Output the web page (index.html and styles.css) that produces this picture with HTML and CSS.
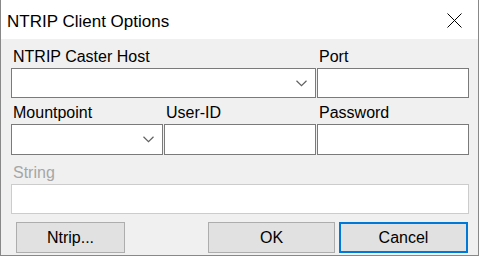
FILE: index.html
```html
<!DOCTYPE html>
<html lang="en">
<head>
    <meta charset="UTF-8">
    <title>NTRIP Client Options</title>
    <link rel="stylesheet" href="styles.css">
</head>
<body>
    <div class="window">
        <div class="titlebar">
            <span class="title">NTRIP Client Options</span>
            <svg class="close" width="15" height="15" viewBox="0 0 15 15">
                <path d="M0.5 0.5 L14.5 14.5 M14.5 0.5 L0.5 14.5" stroke="#000" stroke-width="1" fill="none"/>
            </svg>
        </div>

        <div class="content">
            <div class="fields">
                <div class="field span-2">
                    <label>NTRIP Caster Host</label>
                    <div class="box combo">
                        <svg class="chevron" width="11" height="7" viewBox="0 0 11 7"><path d="M0.5 0.8 L5.5 5.6 L10.5 0.8" stroke="#606060" stroke-width="1.2" fill="none"/></svg>
                    </div>
                </div>
                <div class="field">
                    <label>Port</label>
                    <div class="box"></div>
                </div>

                <div class="field">
                    <label>Mountpoint</label>
                    <div class="box combo tall">
                        <svg class="chevron" width="11" height="7" viewBox="0 0 11 7"><path d="M0.5 0.8 L5.5 5.6 L10.5 0.8" stroke="#606060" stroke-width="1.2" fill="none"/></svg>
                    </div>
                </div>
                <div class="field">
                    <label>User-ID</label>
                    <div class="box tall"></div>
                </div>
                <div class="field">
                    <label>Password</label>
                    <div class="box tall"></div>
                </div>

                <div class="field span-3 disabled">
                    <label>String</label>
                    <div class="box"></div>
                </div>
            </div>

            <div class="buttons">
                <button class="btn ntrip">Ntrip...</button>
                <button class="btn ok">OK</button>
                <button class="btn cancel">Cancel</button>
            </div>
        </div>
    </div>
</body>
</html>
```

FILE: styles.css
```css
body {
    margin: 0;
    background: #ffffff;
    font-family: "Liberation Sans", Arial, sans-serif;
    color: #000;
}
.window {
    width: 479px;
    height: 256px;
    box-sizing: border-box;
    border: 1px solid #888888;
    border-top: none;
    background: #f0f0f0;
    display: flex;
    flex-direction: column;
}
.titlebar {
    height: 39px;
    background: #ffffff;
    display: flex;
    align-items: flex-start;
    justify-content: space-between;
    padding-left: 6px;
}
.title {
    font-size: 17px;
    line-height: 20px;
    padding-top: 12px;
}
.close {
    margin-top: 13px;
    margin-right: 16px;
}
.content {
    padding: 9px 9px 0 10px;
}
.fields {
    display: grid;
    grid-template-columns: repeat(3, 152px);
    column-gap: 1px;
    row-gap: 6px;
}
.field {
    display: flex;
    flex-direction: column;
}
.span-2 {
    grid-column: span 2;
}
.span-3 {
    grid-column: span 3;
    margin-top: 3px;
}
label {
    display: block;
    font-size: 16px;
    line-height: 18px;
    padding-left: 2px;
    margin-bottom: 2px;
}
.box {
    height: 30px;
    box-sizing: border-box;
    background: #ffffff;
    border: 1px solid #7a7a7a;
}
.box.tall {
    height: 31px;
}
.combo {
    display: flex;
    align-items: center;
    justify-content: flex-end;
    padding-right: 8px;
}
.disabled label {
    color: #a6a6a6;
}
.disabled .box {
    border-color: #cccccc;
}
.buttons {
    display: flex;
    margin-top: 8px;
    padding: 0 1px 0 5px;
}
.btn {
    height: 31px;
    box-sizing: border-box;
    background: #e1e1e1;
    border: 1px solid #adadad;
    font-family: "Liberation Sans", Arial, sans-serif;
    font-size: 16px;
    color: #000;
    padding: 0;
}
.ntrip {
    width: 109px;
}
.ok {
    width: 127px;
    margin-left: auto;
}
.cancel {
    width: 129px;
    margin-left: 4px;
    border: 2px solid #0078d7;
}
```
